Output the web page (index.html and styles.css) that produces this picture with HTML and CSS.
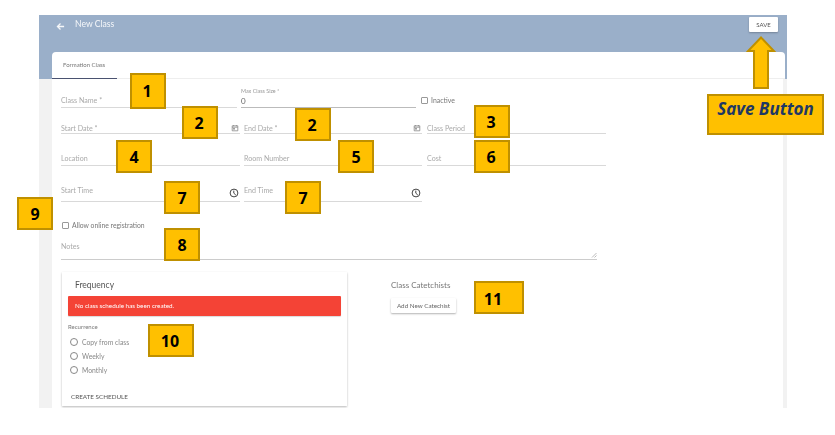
FILE: index.html
```html
<!DOCTYPE html>
<html lang="en">
<head>
<meta charset="utf-8">
<title>New Class</title>
<link rel="stylesheet" href="styles.css">
</head>
<body>
<svg class="defs" width="0" height="0" aria-hidden="true">
  <symbol id="cal" viewBox="0 0 8 8"><path d="M1.2 1.8h5.6v5H1.2z M1.2 3.2h5.6" fill="none" stroke="#888" stroke-width=".8"/><path d="M2.5 1v1.2M5.5 1v1.2" stroke="#888" stroke-width=".7"/><rect x="2.2" y="4" width="1.6" height="1.6" fill="#888"/></symbol>
  <symbol id="clock" viewBox="0 0 10 10"><circle cx="5" cy="5" r="3.9" fill="none" stroke="#444" stroke-width="1"/><path d="M4.8 2.6V5.2L6.8 7" fill="none" stroke="#444" stroke-width="1"/></symbol>
</svg>
<main class="frame">
  <header class="hero">
    <div class="title">
      <svg class="back" viewBox="0 0 10 10" width="9" height="9"><path d="M9 5H2M5 1.6 1.6 5 5 8.4" fill="none" stroke="#fff" stroke-width="1.4"/></svg>
      <span>New Class</span>
    </div>
    <button class="save">SAVE</button>
  </header>
  <section class="sheet">
    <nav class="tabs"><span class="tab">Formation Class</span></nav>
    <form class="form">
      <div class="row r1">
        <div class="field w176 pad2"><span class="lbl">Class Name *</span></div>
        <div class="field w175 stack"><span class="mini">Max Class Size *</span><span class="val">0</span></div>
        <label class="check inactive"><i class="box"></i>Inactive</label>
      </div>
      <div class="row r2">
        <div class="field w179 pad1"><span class="lbl">Start Date *</span><svg class="cal"><use href="#cal"/></svg></div>
        <div class="field w178 pad1"><span class="lbl">End Date *</span><svg class="cal"><use href="#cal"/></svg></div>
        <div class="field w179 last pad1"><span class="lbl">Class Period</span></div>
      </div>
      <div class="row r3">
        <div class="field w179 pad2"><span class="lbl">Location</span></div>
        <div class="field w178 pad2"><span class="lbl">Room Number</span></div>
        <div class="field w179 last pad2"><span class="lbl">Cost</span></div>
      </div>
      <div class="row r4">
        <div class="field w179 pad7"><span class="lbl">Start Time</span><svg class="clock"><use href="#clock"/></svg></div>
        <div class="field w178 pad7"><span class="lbl">End Time</span><svg class="clock"><use href="#clock"/></svg></div>
      </div>
      <label class="check online"><i class="box"></i>Allow online registration</label>
      <div class="field notes"><span class="lbl">Notes</span><svg class="grip" viewBox="0 0 6 6" width="6" height="6"><path d="M1 5.5 5.5 1M3.5 5.5 5.5 3.5" stroke="#aaa" stroke-width=".8"/></svg></div>
      <div class="lower">
        <div class="freq">
          <h2 class="freq-title">Frequency</h2>
          <div class="alert">No class schedule has been created.</div>
          <div class="rec">Recurrence</div>
          <label class="radio"><i class="dot"></i>Copy from class</label>
          <label class="radio"><i class="dot"></i>Weekly</label>
          <label class="radio"><i class="dot"></i>Monthly</label>
          <div class="create">CREATE SCHEDULE</div>
        </div>
        <div class="cate">
          <h2 class="cate-title">Class Catetchists</h2>
          <button class="add" type="button">Add New Catechist</button>
        </div>
      </div>
    </form>
  </section>
</main>

<div class="call c1">1</div>
<div class="call c2a">2</div>
<div class="call c2b">2</div>
<div class="call c3">3</div>
<div class="call c4">4</div>
<div class="call c5">5</div>
<div class="call c6">6</div>
<div class="call c7a">7</div>
<div class="call c7b">7</div>
<div class="call c8">8</div>
<div class="call c9">9</div>
<div class="call c10">10</div>
<div class="call c11">11</div>
<div class="call csave">Save Button</div>
<svg class="arrow" viewBox="0 0 30 54" width="30" height="54"><path d="M15 1.5 28 15H22V52H8V15H2Z" fill="#ffc000" stroke="#bf9000" stroke-width="2"/></svg>
</body>
</html>
```
FILE: styles.css
```css
* { box-sizing: border-box; }
html, body { margin: 0; background: #fff; }
body { width: 835px; height: 435px; padding: 15px 0 0 39px; position: relative; overflow: hidden; font-family: "Lato", "Open Sans", sans-serif; }
.defs { position: absolute; }
.frame { width: 748px; height: 393px; background: #f2f2f2; overflow: hidden; filter: blur(.35px); }
.hero { height: 64px; background: #9aafc9; display: flex; justify-content: space-between; align-items: flex-start; padding: 2px 9px 0 17px; }
.title { display: flex; align-items: center; gap: 10px; color: #fff; font-size: 8.6px; height: 14px; opacity: .9; }
.back { margin-top: 4px; }
.save { width: 29px; height: 15px; padding: 0; border: 0; border-radius: 1px; background: #fff; color: #555; font: 6px "Lato", sans-serif; box-shadow: 0 1px 2px rgba(0,0,0,.25); }
.sheet { margin: -27px 4px 0 13px; height: 356px; }
.tabs { height: 27px; margin-right: -2px; background: #fff; border-radius: 4px 4px 0 0; border-bottom: 1px solid #eee; }
.tab { display: flex; align-items: center; width: 65px; height: 27px; padding: 0 0 2px 11px; font-size: 6px; color: #777; border-bottom: 1px solid #4a5270; }
.form { padding-left: 9px; height: 329px; background: #fff; }
.row { display: flex; align-items: flex-end; gap: 4px; }
.r1 { height: 29px; }
.r2 { height: 26px; }
.r3 { height: 32px; }
.r4 { height: 36px; }
.field { display: flex; justify-content: space-between; align-items: flex-end; border-bottom: 1px solid #d9d9d9; height: 20px; position: relative; flex: none; }
.w176 { width: 176px; }
.w175 { width: 175px; }
.w179 { width: 179px; }
.w178 { width: 178px; }
.last { margin-left: 1px; }
.pad1 { padding-bottom: 0; }
.pad2 { padding-bottom: 1px; }
.pad7 { padding-bottom: 5px; height: 30px; }
.lbl { font-size: 7.1px; line-height: 10px; color: #aaa; }
.pad1 .lbl { margin-bottom: -1px; }
.stack { display: block; height: 24px; border-color: #bbb; }
.mini { display: block; font-size: 5.4px; line-height: 8px; margin-top: 3px; color: #999; }
.val { display: block; font-size: 8px; line-height: 11px; margin-top: 1px; color: #666; }
.cal { width: 8px; height: 8px; margin-bottom: 1px; margin-right: 1px; }
.clock { width: 10px; height: 10px; position: absolute; right: 1px; bottom: 3px; }
.check { display: flex; align-items: center; gap: 3px; font-size: 6.9px; color: #777; }
.box { display: block; width: 7px; height: 7px; border: 1px solid #999; border-radius: 1px; flex: none; }
.inactive { margin: 0 0 3px 1px; line-height: 10px; }
.online { height: 10px; margin: 18px 0 0 1px; gap: 3px; font-size: 6.8px; }
.notes { width: 536px; height: 30px; border-bottom: 1.5px solid #ccc; align-items: center; }
.notes .lbl { margin-top: 5px; }
.grip { position: absolute; right: 0; bottom: 1px; }
.lower { display: flex; margin-top: 12px; }
.freq { width: 285px; height: 134px; margin-left: 1px; flex: none; padding: 0 6px; box-shadow: 0 1px 2px rgba(0,0,0,.28); position: relative; }
.freq-title { margin: 0; padding: 7px 0 0 7px; height: 24px; font-size: 8.5px; line-height: 12px; font-weight: 400; color: #555; }
.alert { height: 20px; background: #f44336; color: #fff; font-size: 6.3px; line-height: 20px; padding-left: 7px; border-radius: 1px; box-shadow: 0 1px 1px rgba(0,0,0,.15); }
.rec { margin-top: 6px; height: 10px; font-size: 6px; line-height: 10px; color: #777; }
.radio { display: flex; align-items: center; gap: 4px; height: 14px; font-size: 6.8px; color: #888; }
.radio:first-of-type { margin-top: 3px; }
.dot { display: block; width: 8px; height: 8px; margin-left: 2px; border: 1px solid #888; border-radius: 50%; }
.create { position: absolute; left: 9px; top: 120px; font-size: 6.3px; line-height: 10px; color: #555; }
.cate { margin-left: 44px; }
.cate-title { margin: 7px 0 0; font-size: 8px; line-height: 12px; font-weight: 400; color: #777; }
.add { display: block; width: 65px; height: 15px; margin-top: 7px; padding: 0; border: 0; border-radius: 1px; background: #fff; color: #666; font: 6.3px "Lato", sans-serif; box-shadow: 0 1px 2px rgba(0,0,0,.3); }
.call { position: absolute; width: 36px; height: 33px; display: flex; align-items: center; justify-content: center; background: #ffc000; border: 2px solid #bf9000; color: #000; font: 700 16px "Open Sans", sans-serif; }
.c1 { left: 130px; top: 73px; height: 36px; padding-right: 2px; }
.c2a { left: 182px; top: 106px; padding-right: 2px; }
.c2b { left: 295px; top: 108px; padding-right: 2px; }
.c3 { left: 474px; top: 105px; padding-right: 2px; }
.c4 { left: 116px; top: 140px; }
.c5 { left: 338px; top: 140px; }
.c6 { left: 474px; top: 140px; padding-right: 2px; }
.c7a { left: 164px; top: 181px; }
.c7b { left: 285px; top: 181px; }
.c8 { left: 164px; top: 228px; }
.c9 { left: 17px; top: 197px; }
.c10 { left: 148px; top: 324px; width: 46px; padding-right: 2px; }
.c11 { left: 474px; top: 281px; width: 50px; padding: 2px 12px 0 0; }
.csave { left: 707px; top: 94px; width: 117px; height: 41px; align-items: flex-start; padding-top: 1px; color: #1f3864; font-style: italic; font-size: 17px; line-height: 24px; }
.arrow { position: absolute; left: 746px; top: 36px; }
```
